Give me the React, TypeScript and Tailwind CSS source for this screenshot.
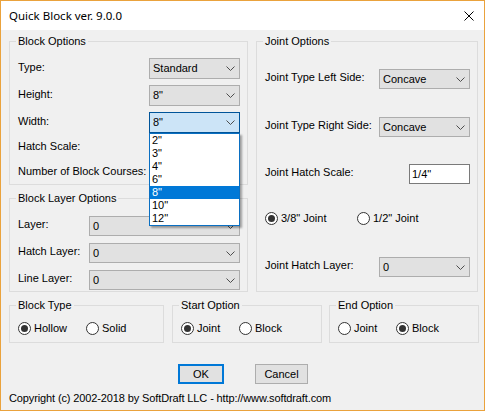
import React from "react";

function Chevron() {
  return (
    <svg width="9" height="5" viewBox="0 0 9 5" className="shrink-0">
      <polyline points="0.5,0.5 4.5,4.5 8.5,0.5" fill="none" stroke="#4d4d4d" strokeWidth="1" />
    </svg>
  );
}

function Combo({ value, className, focused }: { value: string; className: string; focused?: boolean }) {
  return (
    <div
      className={`flex items-center justify-between border pl-[3px] pr-[4px] ${
        focused ? "border-[#005499] bg-[#cce4f7]" : "border-[#adadad] bg-[#e1e1e1]"
      } ${className}`}
    >
      <span>{value}</span>
      <Chevron />
    </div>
  );
}

function Radio({ label, checked, className }: { label: string; checked?: boolean; className?: string }) {
  return (
    <div className={`flex items-center ${className ?? ""}`}>
      <span className="flex h-[13px] w-[13px] shrink-0 items-center justify-center rounded-full border border-[#333333] bg-white">
        {checked && <span className="h-[7px] w-[7px] rounded-full bg-[#333333]" />}
      </span>
      <span className="ml-[3px] leading-[13px]">{label}</span>
    </div>
  );
}

function Group({ title, className, children }: { title: string; className: string; children?: React.ReactNode }) {
  return (
    <fieldset className={`border border-[#dcdcdc] ${className}`}>
      <legend className="ml-[6px] px-[2px] leading-[13px]">{title}</legend>
      {children}
    </fieldset>
  );
}

export default function App() {
  const items = ['2"', '3"', '4"', '6"', '8"', '10"', '12"'];
  return (
    <div className="flex h-[411px] w-[485px] flex-col border border-[#eaa23c] bg-[#f0f0f0] font-['Liberation_Sans',Arial,sans-serif] text-[11px] text-black">
      <div className="flex h-[29px] shrink-0 items-center justify-between bg-white pl-[8px] pr-[10px]">
        <span className="font-['Noto_Sans',sans-serif] text-[11.5px]">Quick Block ver. 9.0.0</span>
        <svg width="10" height="10" viewBox="0 0 10 10">
          <path d="M0.5 0.5 L9.5 9.5 M9.5 0.5 L0.5 9.5" stroke="#000" strokeWidth="1" fill="none" />
        </svg>
      </div>

      <div className="flex flex-col pl-[8px] pt-[5px]">
        <div className="flex gap-[8px]">
          <div className="flex w-[239px] flex-col gap-[7px]">
            <Group title="Block Options" className="h-[150px]">
              <div className="flex flex-col pl-[8px] pr-[7px] pt-[10px]">
                <div className="flex h-[21px] items-center justify-between">
                  <span className="mb-[3px]">Type:</span>
                  <Combo value="Standard" className="h-[21px] w-[91px]" />
                </div>
                <div className="mt-[6px] flex h-[21px] items-center justify-between">
                  <span className="mb-[3px]">Height:</span>
                  <Combo value={'8"'} className="h-[21px] w-[91px]" />
                </div>
                <div className="mt-[6px] flex h-[21px] items-center justify-between">
                  <span className="mb-[3px]">Width:</span>
                  <div className="relative">
                    <Combo value={'8"'} focused className="h-[21px] w-[91px]" />
                    <div className="absolute left-0 top-full z-10 w-full border border-[#0a6fc2] bg-white shadow-[2px_2px_2px_rgba(0,0,0,0.35)]">
                      {items.map((it) => (
                        <div
                          key={it}
                          className={`h-[13px] pl-[2px] leading-[13px] ${it === '8"' ? "bg-[#0078d7] text-white" : ""}`}
                        >
                          {it}
                        </div>
                      ))}
                    </div>
                  </div>
                </div>
                <div className="mt-[7px] h-[13px] leading-[13px]">Hatch Scale:</div>
                <div className="mt-[12px] h-[13px] leading-[13px]">Number of Block Courses:</div>
              </div>
            </Group>

            <Group title="Block Layer Options" className="h-[100px]">
              <div className="flex flex-col gap-[7px] pl-[8px] pr-[7px] pt-[11px]">
                <div className="flex h-[20px] items-center justify-between">
                  <span className="mb-[3px]">Layer:</span>
                  <Combo value="0" className="h-[20px] w-[151px]" />
                </div>
                <div className="flex h-[20px] items-center justify-between">
                  <span className="mb-[3px]">Hatch Layer:</span>
                  <Combo value="0" className="h-[20px] w-[151px]" />
                </div>
                <div className="flex h-[20px] items-center justify-between">
                  <span className="mb-[3px]">Line Layer:</span>
                  <Combo value="0" className="h-[20px] w-[151px]" />
                </div>
              </div>
            </Group>
          </div>

          <Group title="Joint Options" className="h-[257px] w-[222px]">
            <div className="flex flex-col pl-[8px] pr-[7px] pt-[21px]">
              <div className="flex h-[20px] items-center justify-between">
                <span className="mb-[3px]">Joint Type Left Side:</span>
                <Combo value="Concave" className="h-[20px] w-[91px]" />
              </div>
              <div className="mt-[28px] flex h-[20px] items-center justify-between">
                <span className="mb-[3px]">Joint Type Right Side:</span>
                <Combo value="Concave" className="h-[20px] w-[91px]" />
              </div>
              <div className="mt-[27px] flex h-[20px] items-center justify-between">
                <span className="mb-[3px]">Joint Hatch Scale:</span>
                <div className="flex h-[20px] w-[61px] items-center border border-[#7a7a7a] bg-white pl-[2px]">1/4"</div>
              </div>
              <div className="mt-[28px] flex h-[13px] items-center">
                <Radio label={'3/8" Joint'} checked className="w-[92px]" />
                <Radio label={'1/2" Joint'} />
              </div>
              <div className="mt-[32px] flex h-[20px] items-center justify-between">
                <span className="mb-[3px]">Joint Hatch Layer:</span>
                <Combo value="0" className="h-[20px] w-[91px]" />
              </div>
            </div>
          </Group>
        </div>

        <div className="mt-[7px] flex">
          <Group title="Block Type" className="h-[44px] w-[155px]">
            <div className="flex pl-[8px] pt-[10px]">
              <Radio label="Hollow" checked className="w-[68px]" />
              <Radio label="Solid" />
            </div>
          </Group>
          <Group title="Start Option" className="ml-[8px] h-[44px] w-[150px]">
            <div className="flex pl-[8px] pt-[10px]">
              <Radio label="Joint" checked className="w-[58px]" />
              <Radio label="Block" />
            </div>
          </Group>
          <Group title="End Option" className="ml-[7px] h-[44px] w-[150px]">
            <div className="flex pl-[8px] pt-[10px]">
              <Radio label="Joint" className="w-[58px]" />
              <Radio label="Block" checked />
            </div>
          </Group>
        </div>

        <div className="mt-[21px] flex pl-[169px]">
          <div className="flex h-[20px] w-[46px] items-center justify-center border-2 border-[#0078d7] bg-[#e1e1e1]">OK</div>
          <div className="ml-[31px] flex h-[20px] w-[53px] items-center justify-center border border-[#adadad] bg-[#e1e1e1]">Cancel</div>
        </div>

        <div className="mt-[8px] h-[13px] leading-[13px] tracking-[-0.12px]">Copyright (c) 2002-2018 by SoftDraft LLC - http://www.softdraft.com</div>
      </div>
    </div>
  );
}
